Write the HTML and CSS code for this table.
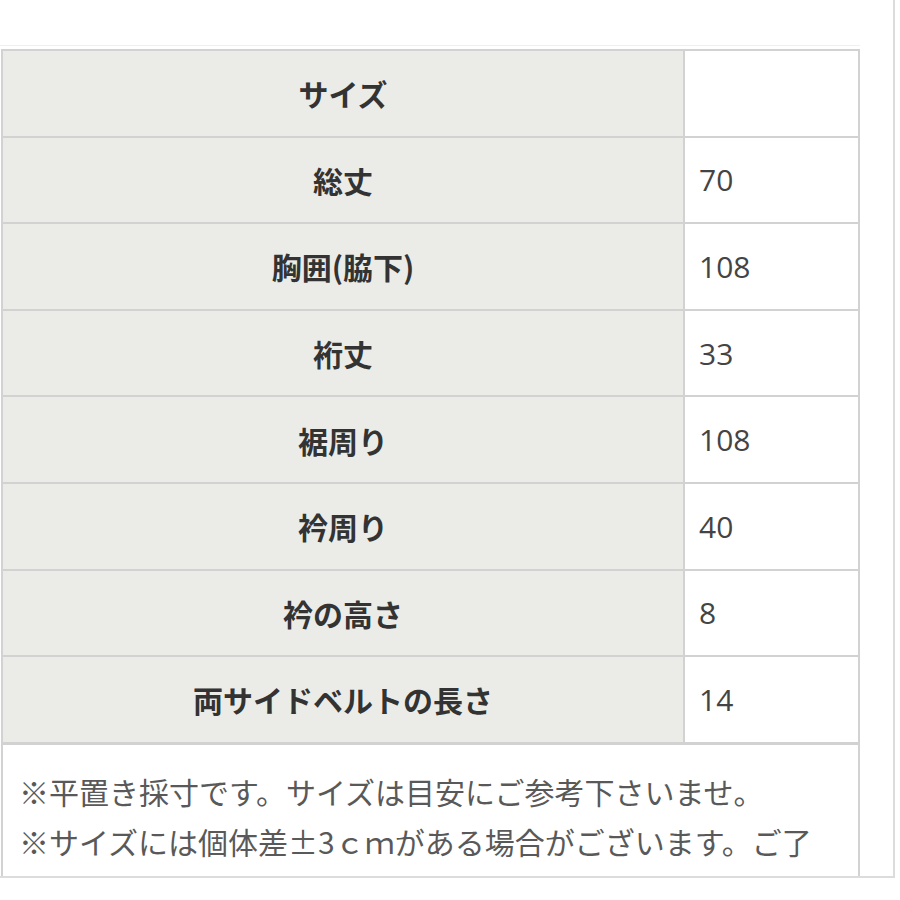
FILE: index.html
```html
<!DOCTYPE html>
<html lang="ja">
<head>
<meta charset="utf-8">
<link rel="stylesheet" href="styles.css">
</head>
<body>
<div class="frame">
  <div class="rule"></div>
  <div class="sheet">
    <div class="label">サイズ</div><div class="value"></div>
    <div class="label">総丈</div><div class="value">70</div>
    <div class="label">胸囲(脇下)</div><div class="value">108</div>
    <div class="label">裄丈</div><div class="value">33</div>
    <div class="label">裾周り</div><div class="value">108</div>
    <div class="label">衿周り</div><div class="value">40</div>
    <div class="label">衿の高さ</div><div class="value">8</div>
    <div class="label">両サイドベルトの長さ</div><div class="value">14</div>
    <div class="note">
      <p>※平置き採寸です。サイズは目安にご参考下さいませ。</p>
      <p>※サイズには個体差±3ｃｍがある場合がございます。ご了</p>
    </div>
  </div>
</div>
</body>
</html>
```
FILE: styles.css
```css
html, body {
  margin: 0;
  padding: 0;
  background: #ffffff;
}
.frame {
  width: 893px;
  height: 876px;
  border-right: 2px solid #dcdcdc;
  border-bottom: 2px solid #dcdcdc;
  box-sizing: content-box;
  overflow: hidden;
  display: flex;
  flex-direction: column;
}
.rule {
  margin-top: 45px;
  height: 1px;
  width: 860px;
  background: #f0f0f0;
}
.sheet {
  margin-top: 3px;
  margin-left: 1px;
  width: 859px;
  box-sizing: border-box;
  display: grid;
  grid-template-columns: 680px 173px;
  grid-template-rows: repeat(8, 84.6px) 1fr;
  gap: 2px;
  padding: 2px 2px 0 2px;
  background: #d2d2d2;
  flex: 1;
}
.label {
  background: #ebece8;
  display: flex;
  align-items: center;
  justify-content: center;
  font-family: "Noto Sans CJK JP", sans-serif;
  font-weight: 700;
  font-size: 30px;
  color: #333333;
}
.value {
  background: #ffffff;
  display: flex;
  align-items: center;
  padding-left: 14px;
  font-family: "Open Sans", "Noto Sans CJK JP", sans-serif;
  font-size: 30px;
  color: #444444;
}
.note {
  grid-column: 1 / 3;
  background: #ffffff;
  margin-top: 1px;
  padding: 21px 20px 0 16px;
  font-family: "Noto Sans CJK JP", sans-serif;
  font-size: 30px;
  line-height: 50px;
  color: #595959;
}
.note p {
  margin: 0;
  white-space: nowrap;
}
```
